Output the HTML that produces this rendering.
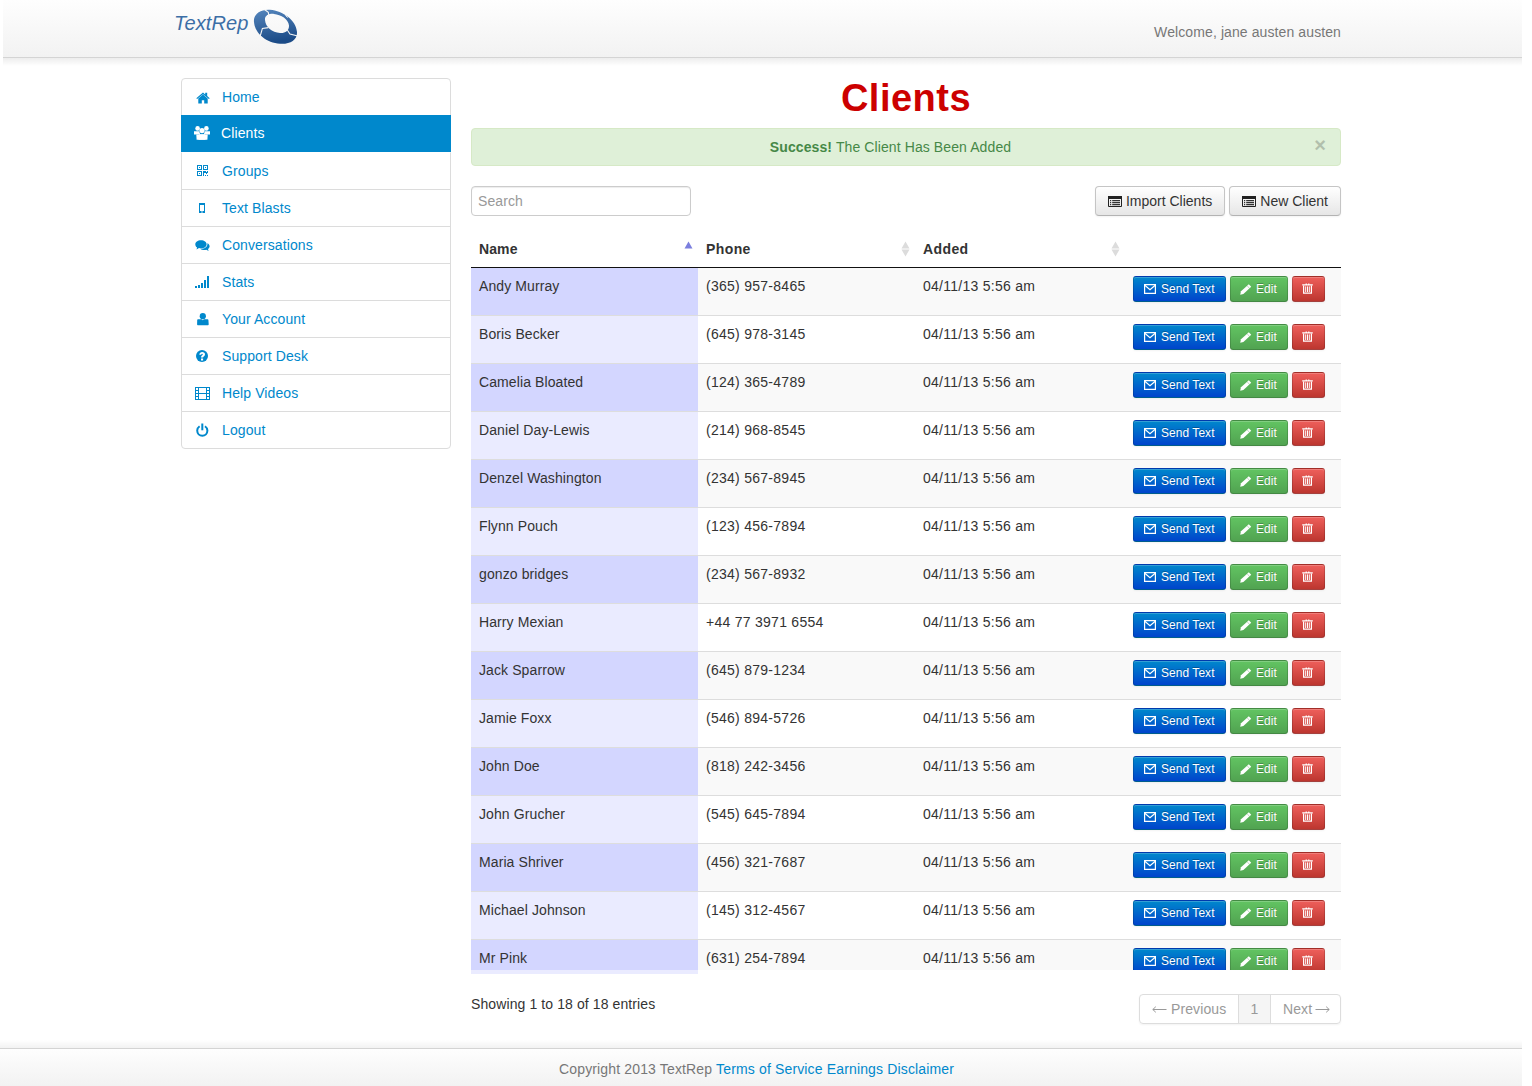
<!DOCTYPE html>
<html><head><meta charset="utf-8">
<style>
*{box-sizing:border-box;}
html,body{margin:0;padding:0;}
body{letter-spacing:.1px;width:1532px;height:1086px;overflow:hidden;position:relative;background:#fff;font-family:"Liberation Sans",sans-serif;font-size:14px;line-height:20px;color:#333;}
a{color:#0088cc;text-decoration:none;}
#hdr{position:absolute;left:3px;top:0;width:1519px;height:58px;background:linear-gradient(#fefefe,#f2f2f2);border-bottom:1px solid #d4d4d4;}
#hsh{position:absolute;left:3px;top:58px;width:1519px;height:8px;background:linear-gradient(rgba(0,0,0,.07),rgba(0,0,0,0));}
#logo{position:absolute;left:175px;top:9px;}
#logotxt{position:absolute;left:-4px;top:4px;font-style:italic;font-size:20px;line-height:20px;color:#3c6ea6;white-space:nowrap;}
#welcome{position:absolute;right:181px;top:22px;color:#777;font-size:14px;}
#side{position:absolute;left:181px;top:78px;width:270px;margin:0;padding:0;list-style:none;border-radius:4px;}
#side li a{display:block;position:relative;height:38px;margin:0 0 -1px;padding:8px 14px 8px 40px;border:1px solid #dcdcdc;color:#0088cc;background:#fff;}
#side li:first-child a{border-radius:4px 4px 0 0;}
#side li:last-child a{border-radius:0 0 4px 4px;}
#side li.active + li a{border-top-color:#fff;}
#side li.active a{z-index:2;height:37px;margin-bottom:0;padding:8px 14px 8px 40px;border:0;background:#0088cc;color:#fff;}
#side svg{position:absolute;left:14px;top:12px;}
#main{position:absolute;left:471px;top:60px;width:870px;}
h1{margin:0;position:absolute;left:0;width:870px;top:14px;text-align:center;color:#cc0000;font-size:38px;line-height:48px;font-weight:bold;letter-spacing:.5px;}
.alert{position:absolute;left:0;top:68px;width:870px;height:38px;padding:8px 45px 8px 14px;background:#dff0d8;border:1px solid #d6e9c6;border-radius:4px;color:#468847;text-align:center;}
.close{position:absolute;right:14px;top:6px;font-size:20px;font-weight:bold;color:#000;opacity:.2;line-height:20px;}
#search{position:absolute;left:0;top:126px;width:220px;height:30px;border:1px solid #ccc;border-radius:4px;padding:4px 6px;color:#999;box-shadow:inset 0 1px 1px rgba(0,0,0,.075);}
.btn{letter-spacing:0;display:inline-block;height:30px;padding:4px 12px;border:1px solid #c5c5c5;border-bottom-color:#b3b3b3;border-radius:4px;background:linear-gradient(#ffffff,#e6e6e6);color:#333;box-shadow:inset 0 1px 0 rgba(255,255,255,.2),0 1px 2px rgba(0,0,0,.05);white-space:nowrap;}
#tb{position:absolute;right:0;top:126px;}
table{border-collapse:separate;border-spacing:0;table-layout:fixed;}
#thead{position:absolute;left:0;top:171px;width:870px;}
#thead th{height:37px;text-align:left;padding:8px;font-weight:bold;border-bottom:1px solid #111;position:relative;vertical-align:top;box-sizing:border-box;}
#thead th svg{position:absolute;right:5px;top:10px;}
#body{position:absolute;left:0;top:208px;width:870px;height:702px;overflow:hidden;}
#strip{position:absolute;left:0;top:910px;width:227px;height:4px;background:#eaebff;}
#rows{width:870px;}
#body td{padding:8px;height:48px;vertical-align:top;border-top:1px solid #ddd;white-space:nowrap;overflow:hidden;box-sizing:border-box;}
#body tr:first-child td{border-top:0;height:47px;}
#body tr.odd td{background:#f9f9f9;}
#body tr.odd td.s{background:#d3d6ff;}
#body tr.even td.s{background:#eaebff;}
.c1{width:227px;}.c2{width:217px;}.c3{width:210px;}.c4{width:216px;}
#body td.c2,#body td.c3{letter-spacing:.27px;}
#thead th.c2,#thead th.c3{letter-spacing:.4px;}
.bs{display:inline-block;height:26px;padding:2px 10px;font-size:11.9px;line-height:20px;border-radius:3px;color:#fff;border:1px solid rgba(0,0,0,.15);border-bottom-color:rgba(0,0,0,.3);text-shadow:0 -1px 0 rgba(0,0,0,.25);white-space:nowrap;vertical-align:top;box-shadow:inset 0 1px 0 rgba(255,255,255,.2),0 1px 2px rgba(0,0,0,.05);}
.bp{width:93px;background:linear-gradient(#0088cc,#0044cc);}
.bg{width:58px;background:linear-gradient(#62c462,#51a351);}
.bd{width:33px;background:linear-gradient(#ee5f5b,#bd362f);}
#info{position:absolute;left:0;top:934px;}
#pag{position:absolute;left:1139px;top:994px;width:202px;height:30px;display:flex;border:1px solid #ddd;border-radius:4px;box-shadow:0 1px 2px rgba(0,0,0,.05);color:#999;}
#pag span{position:relative;display:block;height:28px;padding-top:4px;padding-bottom:4px;line-height:20px;border-left:1px solid #ddd;}
#pag span:first-child{border-left:0;}
#ftr{position:absolute;left:0;top:1048px;width:1522px;height:38px;border-top:1px solid #d4d4d4;background:linear-gradient(#fefefe,#f2f2f2);}
#fsh{position:absolute;left:0;top:1040px;width:1522px;height:8px;background:linear-gradient(rgba(0,0,0,0),rgba(0,0,0,.05));}
#ftxt{position:absolute;left:559px;top:10px;color:#777;white-space:nowrap;letter-spacing:.15px;}
</style></head><body>
<div id="hdr">
  <div id="logo"><span id="logotxt">TextRep</span><svg id="ring" width="52" height="42" viewBox="0 0 52 42" style="position:absolute;left:72px;top:-3px">
<defs><linearGradient id="rg" x1="0" y1="0" x2="0.2" y2="1"><stop offset="0" stop-color="#5586bd"/><stop offset="1" stop-color="#1b4b87"/></linearGradient></defs>
<path fill="url(#rg)" fill-rule="evenodd" d="M4 16C3 8 11 3 20 3.8C33 5 46 14 47 26C47.5 34 40 38.5 30 37.8C17 37 5 28 4 16z M15 14C14.5 9.5 19 7.5 24 7.9C31 8.5 38.5 13 39 19.5C39.3 24.5 35 27.5 30 27C22 26.5 15.5 21 15 14z"/>
<path d="M14.5 3.5L18.3 6.4L18.9 9.8" stroke="#f5f5f5" stroke-width="1.1" fill="none"/>
<path d="M35.5 9.2L37.6 11.6" stroke="#f5f5f5" stroke-width="1" fill="none"/>
<path d="M37.3 24L40 28L47.8 30" stroke="#f5f5f5" stroke-width="1.1" fill="none"/>
<path d="M18.5 21.6L12.4 22.4L9.8 31.5" stroke="#f5f5f5" stroke-width="1.1" fill="none"/>
</svg></div>
  <div id="welcome">Welcome, jane austen austen</div>
</div>

<div id="hsh"></div>
<ul id="side">
  <li><a><svg width="14" height="12" viewBox="0 0 14 12" style="left:14px;top:13px"><path d="M0.3 6.2L7 0.6L9.2 2.4V0.8h2v3.3L13.7 6.2L12.9 7.1L7 2.2L1.1 7.1z" fill="#0088cc"/><path d="M2.3 6.4L7 2.6L11.7 6.4V11.4H8.2V8.3H5.8V11.4H2.3z" fill="#0088cc"/></svg>Home</a></li>
  <li class="active"><a><svg width="16" height="15" viewBox="0 0 16 15" style="left:13px;top:11px"><circle cx="3.6" cy="2.4" r="2.3" fill="#fff"/><circle cx="12.4" cy="2.4" r="2.3" fill="#fff"/><path d="M0 5.2h5.2l1 3.2H0z M10.8 5.2H16v3.2H9.8z" fill="#fff"/><circle cx="8" cy="4.6" r="2.6" fill="#fff"/><path d="M5.2 8.2h5.6v.1L11.6 13.7H4.4z" fill="#fff"/><path d="M2.3 8.4h11.4L13.4 13.7H2.6z" fill="#fff"/></svg>Clients</a></li>
  <li><a><svg width="11" height="11" viewBox="0 0 11 11" shape-rendering="crispEdges" style="left:15px;top:12px"><path d="M0.5 0.5h4v4h-4z M6.5 0.5h4v4h-4z M0.5 6.5h4v4h-4z" fill="none" stroke="#0088cc" stroke-width="1"/><path d="M2 2h1v1H2z M8 2h1v1H8z M2 8h1v1H2z M6 6h1v5H6z M7 6h2v2H7z M9 7h1v2H9z M10 6h1v2h-1z M8 10h1v1H8z M10 10h1v1h-1z" fill="#0088cc"/></svg>Groups</a></li>
  <li><a><svg width="6" height="10" viewBox="0 0 6 10" style="left:17px;top:13px"><path d="M0 0h6v2H0z M0 0h1v10H0z M5 0h1v10H5z M0 8h2.6v2H0z M3.4 8H6v2H3.4z" fill="#0088cc"/></svg>Text Blasts</a></li>
  <li><a><svg width="15" height="12" viewBox="0 0 15 12" style="left:13px;top:13px"><path d="M6 0.2C9.3 0.2 11.6 1.9 11.6 4.3S9.3 8.4 6 8.4C5.3 8.4 4.6 8.3 4 8.1L1.5 9.4L2.1 7.6C0.8 6.8 0.3 5.6 0.3 4.3C0.3 1.9 2.7 0.2 6 0.2z" fill="#0088cc"/><path d="M12.3 3.2C13.8 3.9 14.6 5 14.6 6.3C14.6 7.5 14 8.4 13 9.1L13.6 10.9L11.3 9.8C10.6 10 10 10.1 9.2 10.1C7.7 10.1 6.4 9.7 5.6 9C9.5 9 12.4 6.9 12.4 4.3z" fill="#0088cc"/></svg>Conversations</a></li>
  <li><a><svg width="14" height="12" viewBox="0 0 14 12" shape-rendering="crispEdges" style="left:13px;top:12px"><path d="M0 10h2v2H0z M3 9h2v3H3z M6 7h2v5H6z M9 4h2v8H9z M12 0h2v12h-2z" fill="#0088cc"/></svg>Stats</a></li>
  <li><a><svg width="12" height="13" viewBox="0 0 12 13" style="left:15px;top:12px"><circle cx="5.8" cy="3.2" r="3.1" fill="#0088cc"/><path d="M1 6.3h3.5L5.8 7.2L7.1 6.3h3.5c.5 0 .8.4.8.8L11.7 11.2c0 .6-.4 1-1 1H1.1c-.6 0-1-.4-1-1L.2 7.1c0-.5.4-.8.8-.8z" fill="#0088cc"/></svg>Your Account</a></li>
  <li><a><svg width="12" height="12" viewBox="0 0 12 12" style="left:14px;top:12px"><circle cx="6" cy="6" r="6" fill="#0088cc"/><path d="M3.3 4.7C3.5 3 4.6 2.1 6.2 2.1C7.9 2.1 9 3 9 4.4C9 6 7.2 6.2 7.1 7.5H5C5 5.6 6.8 5.4 6.8 4.5C6.8 4 6.5 3.8 6.1 3.8C5.6 3.8 5.3 4.1 5.2 4.7z M5 8.4h2.1v2H5z" fill="#fff"/></svg>Support Desk</a></li>
  <li><a><svg width="15" height="13" viewBox="0 0 15 13" shape-rendering="crispEdges" style="left:13px;top:12px"><path d="M0.5 0.5h14v12h-14z M3.5 0.5v12 M11.5 0.5v12 M0.5 6.5h14 M0.5 3.5h3 M0.5 9.5h3 M11.5 3.5h3 M11.5 9.5h3" fill="none" stroke="#0088cc" stroke-width="1"/></svg>Help Videos</a></li>
  <li><a><svg width="13" height="14" viewBox="0 0 13 14" style="left:14px;top:11px"><path d="M3.6 3.2C2.2 4.2 1.2 5.7 1.2 7.6C1.2 10.5 3.5 12.8 6.3 12.8S11.4 10.5 11.4 7.6C11.4 5.7 10.4 4.2 9 3.2" fill="none" stroke="#0088cc" stroke-width="2"/><path d="M5.3 0.5h2v6.8h-2z" fill="#0088cc"/></svg>Logout</a></li>
</ul>

<div id="main">
  <h1>Clients</h1>
  <div class="alert"><b>Success!</b> The Client Has Been Added<span class="close">&times;</span></div>
  <div id="search">Search</div>
  <div id="tb"><span class="btn"><svg width="14" height="11" viewBox="0 0 14 11" style="vertical-align:-1px;margin-right:4px"><path d="M0.5 0.5h13v10h-13z" fill="none" stroke="#222" stroke-width="1"/><path d="M0 0h14v3H0z" fill="#222"/><path d="M2 4.1h1.2v1.1H2z M2 6.1h1.2v1.1H2z M2 8.1h1.2v1.1H2z M4.2 4.1h7.8v1.1H4.2z M4.2 6.1h7.8v1.1H4.2z M4.2 8.1h7.8v1.1H4.2z" fill="#333"/></svg>Import Clients</span> <span class="btn"><svg width="14" height="11" viewBox="0 0 14 11" style="vertical-align:-1px;margin-right:4px"><path d="M0.5 0.5h13v10h-13z" fill="none" stroke="#222" stroke-width="1"/><path d="M0 0h14v3H0z" fill="#222"/><path d="M2 4.1h1.2v1.1H2z M2 6.1h1.2v1.1H2z M2 8.1h1.2v1.1H2z M4.2 4.1h7.8v1.1H4.2z M4.2 6.1h7.8v1.1H4.2z M4.2 8.1h7.8v1.1H4.2z" fill="#333"/></svg>New Client</span></div>
  <table id="thead"><tr><th class="c1">Name<svg width="9" height="16" viewBox="0 0 9 16"><path d="M0.5 7.5L4.5 0.5L8.5 7.5z" fill="#7b7fde"/></svg></th><th class="c2">Phone<svg width="9" height="16" viewBox="0 0 9 16"><path d="M0.5 7.5L4.5 0.5L8.5 7.5z M0.5 8.5L4.5 15.5L8.5 8.5z" fill="#dcdcdc"/></svg></th><th class="c3">Added<svg width="9" height="16" viewBox="0 0 9 16"><path d="M0.5 7.5L4.5 0.5L8.5 7.5z M0.5 8.5L4.5 15.5L8.5 8.5z" fill="#dcdcdc"/></svg></th><th class="c4"></th></tr></table>
  <div id="body"><table style="width:870px" id="rows">
<tr class="odd"><td class="c1 s">Andy Murray</td><td class="c2">(365) 957-8465</td><td class="c3">04/11/13 5:56 am</td><td class="c4"><span class="bs bp"><svg class="ic" width="12" height="10" viewBox="0 0 12 10" style="margin-right:5px;vertical-align:-1px"><path d="M0.6 0.6h10.8v8.8H0.6z" fill="none" stroke="#fff" stroke-width="1.2"/><path d="M0.8 1.2L6 5.6L11.2 1.2" fill="none" stroke="#fff" stroke-width="1.2"/></svg>Send Text</span> <span class="bs bg"><svg class="ic" width="12" height="11" viewBox="0 0 12 11" style="margin-right:4px;vertical-align:-2px;margin-left:-1px"><path d="M0.2 10.8L1 7.3L8.8 0.2L11.2 2.8L3.4 9.9z" fill="#fff"/><path d="M7.1 1.7L9.5 4.4" stroke="rgba(0,80,0,.35)" stroke-width=".7"/></svg>Edit</span> <span class="bs bd"><svg class="ic" width="11" height="11" viewBox="0 0 11 11" style="vertical-align:-1px;margin-left:-1px;margin-right:1px"><path d="M0.2 1.3h10.6v1.3H0.2z M3.6 0.4h1.3v1H3.6z M6.1 0.4h1.3v1H6.1z" fill="#fff"/><path d="M1.6 2.4v7.8h7.8V2.4" fill="none" stroke="#fff" stroke-width="1.2"/><path d="M3.7 3.4v5.6M5.5 3.4v5.6M7.3 3.4v5.6" stroke="#fff" stroke-width="1"/></svg></span></td></tr>
<tr class="even"><td class="c1 s">Boris Becker</td><td class="c2">(645) 978-3145</td><td class="c3">04/11/13 5:56 am</td><td class="c4"><span class="bs bp"><svg class="ic" width="12" height="10" viewBox="0 0 12 10" style="margin-right:5px;vertical-align:-1px"><path d="M0.6 0.6h10.8v8.8H0.6z" fill="none" stroke="#fff" stroke-width="1.2"/><path d="M0.8 1.2L6 5.6L11.2 1.2" fill="none" stroke="#fff" stroke-width="1.2"/></svg>Send Text</span> <span class="bs bg"><svg class="ic" width="12" height="11" viewBox="0 0 12 11" style="margin-right:4px;vertical-align:-2px;margin-left:-1px"><path d="M0.2 10.8L1 7.3L8.8 0.2L11.2 2.8L3.4 9.9z" fill="#fff"/><path d="M7.1 1.7L9.5 4.4" stroke="rgba(0,80,0,.35)" stroke-width=".7"/></svg>Edit</span> <span class="bs bd"><svg class="ic" width="11" height="11" viewBox="0 0 11 11" style="vertical-align:-1px;margin-left:-1px;margin-right:1px"><path d="M0.2 1.3h10.6v1.3H0.2z M3.6 0.4h1.3v1H3.6z M6.1 0.4h1.3v1H6.1z" fill="#fff"/><path d="M1.6 2.4v7.8h7.8V2.4" fill="none" stroke="#fff" stroke-width="1.2"/><path d="M3.7 3.4v5.6M5.5 3.4v5.6M7.3 3.4v5.6" stroke="#fff" stroke-width="1"/></svg></span></td></tr>
<tr class="odd"><td class="c1 s">Camelia Bloated</td><td class="c2">(124) 365-4789</td><td class="c3">04/11/13 5:56 am</td><td class="c4"><span class="bs bp"><svg class="ic" width="12" height="10" viewBox="0 0 12 10" style="margin-right:5px;vertical-align:-1px"><path d="M0.6 0.6h10.8v8.8H0.6z" fill="none" stroke="#fff" stroke-width="1.2"/><path d="M0.8 1.2L6 5.6L11.2 1.2" fill="none" stroke="#fff" stroke-width="1.2"/></svg>Send Text</span> <span class="bs bg"><svg class="ic" width="12" height="11" viewBox="0 0 12 11" style="margin-right:4px;vertical-align:-2px;margin-left:-1px"><path d="M0.2 10.8L1 7.3L8.8 0.2L11.2 2.8L3.4 9.9z" fill="#fff"/><path d="M7.1 1.7L9.5 4.4" stroke="rgba(0,80,0,.35)" stroke-width=".7"/></svg>Edit</span> <span class="bs bd"><svg class="ic" width="11" height="11" viewBox="0 0 11 11" style="vertical-align:-1px;margin-left:-1px;margin-right:1px"><path d="M0.2 1.3h10.6v1.3H0.2z M3.6 0.4h1.3v1H3.6z M6.1 0.4h1.3v1H6.1z" fill="#fff"/><path d="M1.6 2.4v7.8h7.8V2.4" fill="none" stroke="#fff" stroke-width="1.2"/><path d="M3.7 3.4v5.6M5.5 3.4v5.6M7.3 3.4v5.6" stroke="#fff" stroke-width="1"/></svg></span></td></tr>
<tr class="even"><td class="c1 s">Daniel Day-Lewis</td><td class="c2">(214) 968-8545</td><td class="c3">04/11/13 5:56 am</td><td class="c4"><span class="bs bp"><svg class="ic" width="12" height="10" viewBox="0 0 12 10" style="margin-right:5px;vertical-align:-1px"><path d="M0.6 0.6h10.8v8.8H0.6z" fill="none" stroke="#fff" stroke-width="1.2"/><path d="M0.8 1.2L6 5.6L11.2 1.2" fill="none" stroke="#fff" stroke-width="1.2"/></svg>Send Text</span> <span class="bs bg"><svg class="ic" width="12" height="11" viewBox="0 0 12 11" style="margin-right:4px;vertical-align:-2px;margin-left:-1px"><path d="M0.2 10.8L1 7.3L8.8 0.2L11.2 2.8L3.4 9.9z" fill="#fff"/><path d="M7.1 1.7L9.5 4.4" stroke="rgba(0,80,0,.35)" stroke-width=".7"/></svg>Edit</span> <span class="bs bd"><svg class="ic" width="11" height="11" viewBox="0 0 11 11" style="vertical-align:-1px;margin-left:-1px;margin-right:1px"><path d="M0.2 1.3h10.6v1.3H0.2z M3.6 0.4h1.3v1H3.6z M6.1 0.4h1.3v1H6.1z" fill="#fff"/><path d="M1.6 2.4v7.8h7.8V2.4" fill="none" stroke="#fff" stroke-width="1.2"/><path d="M3.7 3.4v5.6M5.5 3.4v5.6M7.3 3.4v5.6" stroke="#fff" stroke-width="1"/></svg></span></td></tr>
<tr class="odd"><td class="c1 s">Denzel Washington</td><td class="c2">(234) 567-8945</td><td class="c3">04/11/13 5:56 am</td><td class="c4"><span class="bs bp"><svg class="ic" width="12" height="10" viewBox="0 0 12 10" style="margin-right:5px;vertical-align:-1px"><path d="M0.6 0.6h10.8v8.8H0.6z" fill="none" stroke="#fff" stroke-width="1.2"/><path d="M0.8 1.2L6 5.6L11.2 1.2" fill="none" stroke="#fff" stroke-width="1.2"/></svg>Send Text</span> <span class="bs bg"><svg class="ic" width="12" height="11" viewBox="0 0 12 11" style="margin-right:4px;vertical-align:-2px;margin-left:-1px"><path d="M0.2 10.8L1 7.3L8.8 0.2L11.2 2.8L3.4 9.9z" fill="#fff"/><path d="M7.1 1.7L9.5 4.4" stroke="rgba(0,80,0,.35)" stroke-width=".7"/></svg>Edit</span> <span class="bs bd"><svg class="ic" width="11" height="11" viewBox="0 0 11 11" style="vertical-align:-1px;margin-left:-1px;margin-right:1px"><path d="M0.2 1.3h10.6v1.3H0.2z M3.6 0.4h1.3v1H3.6z M6.1 0.4h1.3v1H6.1z" fill="#fff"/><path d="M1.6 2.4v7.8h7.8V2.4" fill="none" stroke="#fff" stroke-width="1.2"/><path d="M3.7 3.4v5.6M5.5 3.4v5.6M7.3 3.4v5.6" stroke="#fff" stroke-width="1"/></svg></span></td></tr>
<tr class="even"><td class="c1 s">Flynn Pouch</td><td class="c2">(123) 456-7894</td><td class="c3">04/11/13 5:56 am</td><td class="c4"><span class="bs bp"><svg class="ic" width="12" height="10" viewBox="0 0 12 10" style="margin-right:5px;vertical-align:-1px"><path d="M0.6 0.6h10.8v8.8H0.6z" fill="none" stroke="#fff" stroke-width="1.2"/><path d="M0.8 1.2L6 5.6L11.2 1.2" fill="none" stroke="#fff" stroke-width="1.2"/></svg>Send Text</span> <span class="bs bg"><svg class="ic" width="12" height="11" viewBox="0 0 12 11" style="margin-right:4px;vertical-align:-2px;margin-left:-1px"><path d="M0.2 10.8L1 7.3L8.8 0.2L11.2 2.8L3.4 9.9z" fill="#fff"/><path d="M7.1 1.7L9.5 4.4" stroke="rgba(0,80,0,.35)" stroke-width=".7"/></svg>Edit</span> <span class="bs bd"><svg class="ic" width="11" height="11" viewBox="0 0 11 11" style="vertical-align:-1px;margin-left:-1px;margin-right:1px"><path d="M0.2 1.3h10.6v1.3H0.2z M3.6 0.4h1.3v1H3.6z M6.1 0.4h1.3v1H6.1z" fill="#fff"/><path d="M1.6 2.4v7.8h7.8V2.4" fill="none" stroke="#fff" stroke-width="1.2"/><path d="M3.7 3.4v5.6M5.5 3.4v5.6M7.3 3.4v5.6" stroke="#fff" stroke-width="1"/></svg></span></td></tr>
<tr class="odd"><td class="c1 s">gonzo bridges</td><td class="c2">(234) 567-8932</td><td class="c3">04/11/13 5:56 am</td><td class="c4"><span class="bs bp"><svg class="ic" width="12" height="10" viewBox="0 0 12 10" style="margin-right:5px;vertical-align:-1px"><path d="M0.6 0.6h10.8v8.8H0.6z" fill="none" stroke="#fff" stroke-width="1.2"/><path d="M0.8 1.2L6 5.6L11.2 1.2" fill="none" stroke="#fff" stroke-width="1.2"/></svg>Send Text</span> <span class="bs bg"><svg class="ic" width="12" height="11" viewBox="0 0 12 11" style="margin-right:4px;vertical-align:-2px;margin-left:-1px"><path d="M0.2 10.8L1 7.3L8.8 0.2L11.2 2.8L3.4 9.9z" fill="#fff"/><path d="M7.1 1.7L9.5 4.4" stroke="rgba(0,80,0,.35)" stroke-width=".7"/></svg>Edit</span> <span class="bs bd"><svg class="ic" width="11" height="11" viewBox="0 0 11 11" style="vertical-align:-1px;margin-left:-1px;margin-right:1px"><path d="M0.2 1.3h10.6v1.3H0.2z M3.6 0.4h1.3v1H3.6z M6.1 0.4h1.3v1H6.1z" fill="#fff"/><path d="M1.6 2.4v7.8h7.8V2.4" fill="none" stroke="#fff" stroke-width="1.2"/><path d="M3.7 3.4v5.6M5.5 3.4v5.6M7.3 3.4v5.6" stroke="#fff" stroke-width="1"/></svg></span></td></tr>
<tr class="even"><td class="c1 s">Harry Mexian</td><td class="c2">+44 77 3971 6554</td><td class="c3">04/11/13 5:56 am</td><td class="c4"><span class="bs bp"><svg class="ic" width="12" height="10" viewBox="0 0 12 10" style="margin-right:5px;vertical-align:-1px"><path d="M0.6 0.6h10.8v8.8H0.6z" fill="none" stroke="#fff" stroke-width="1.2"/><path d="M0.8 1.2L6 5.6L11.2 1.2" fill="none" stroke="#fff" stroke-width="1.2"/></svg>Send Text</span> <span class="bs bg"><svg class="ic" width="12" height="11" viewBox="0 0 12 11" style="margin-right:4px;vertical-align:-2px;margin-left:-1px"><path d="M0.2 10.8L1 7.3L8.8 0.2L11.2 2.8L3.4 9.9z" fill="#fff"/><path d="M7.1 1.7L9.5 4.4" stroke="rgba(0,80,0,.35)" stroke-width=".7"/></svg>Edit</span> <span class="bs bd"><svg class="ic" width="11" height="11" viewBox="0 0 11 11" style="vertical-align:-1px;margin-left:-1px;margin-right:1px"><path d="M0.2 1.3h10.6v1.3H0.2z M3.6 0.4h1.3v1H3.6z M6.1 0.4h1.3v1H6.1z" fill="#fff"/><path d="M1.6 2.4v7.8h7.8V2.4" fill="none" stroke="#fff" stroke-width="1.2"/><path d="M3.7 3.4v5.6M5.5 3.4v5.6M7.3 3.4v5.6" stroke="#fff" stroke-width="1"/></svg></span></td></tr>
<tr class="odd"><td class="c1 s">Jack Sparrow</td><td class="c2">(645) 879-1234</td><td class="c3">04/11/13 5:56 am</td><td class="c4"><span class="bs bp"><svg class="ic" width="12" height="10" viewBox="0 0 12 10" style="margin-right:5px;vertical-align:-1px"><path d="M0.6 0.6h10.8v8.8H0.6z" fill="none" stroke="#fff" stroke-width="1.2"/><path d="M0.8 1.2L6 5.6L11.2 1.2" fill="none" stroke="#fff" stroke-width="1.2"/></svg>Send Text</span> <span class="bs bg"><svg class="ic" width="12" height="11" viewBox="0 0 12 11" style="margin-right:4px;vertical-align:-2px;margin-left:-1px"><path d="M0.2 10.8L1 7.3L8.8 0.2L11.2 2.8L3.4 9.9z" fill="#fff"/><path d="M7.1 1.7L9.5 4.4" stroke="rgba(0,80,0,.35)" stroke-width=".7"/></svg>Edit</span> <span class="bs bd"><svg class="ic" width="11" height="11" viewBox="0 0 11 11" style="vertical-align:-1px;margin-left:-1px;margin-right:1px"><path d="M0.2 1.3h10.6v1.3H0.2z M3.6 0.4h1.3v1H3.6z M6.1 0.4h1.3v1H6.1z" fill="#fff"/><path d="M1.6 2.4v7.8h7.8V2.4" fill="none" stroke="#fff" stroke-width="1.2"/><path d="M3.7 3.4v5.6M5.5 3.4v5.6M7.3 3.4v5.6" stroke="#fff" stroke-width="1"/></svg></span></td></tr>
<tr class="even"><td class="c1 s">Jamie Foxx</td><td class="c2">(546) 894-5726</td><td class="c3">04/11/13 5:56 am</td><td class="c4"><span class="bs bp"><svg class="ic" width="12" height="10" viewBox="0 0 12 10" style="margin-right:5px;vertical-align:-1px"><path d="M0.6 0.6h10.8v8.8H0.6z" fill="none" stroke="#fff" stroke-width="1.2"/><path d="M0.8 1.2L6 5.6L11.2 1.2" fill="none" stroke="#fff" stroke-width="1.2"/></svg>Send Text</span> <span class="bs bg"><svg class="ic" width="12" height="11" viewBox="0 0 12 11" style="margin-right:4px;vertical-align:-2px;margin-left:-1px"><path d="M0.2 10.8L1 7.3L8.8 0.2L11.2 2.8L3.4 9.9z" fill="#fff"/><path d="M7.1 1.7L9.5 4.4" stroke="rgba(0,80,0,.35)" stroke-width=".7"/></svg>Edit</span> <span class="bs bd"><svg class="ic" width="11" height="11" viewBox="0 0 11 11" style="vertical-align:-1px;margin-left:-1px;margin-right:1px"><path d="M0.2 1.3h10.6v1.3H0.2z M3.6 0.4h1.3v1H3.6z M6.1 0.4h1.3v1H6.1z" fill="#fff"/><path d="M1.6 2.4v7.8h7.8V2.4" fill="none" stroke="#fff" stroke-width="1.2"/><path d="M3.7 3.4v5.6M5.5 3.4v5.6M7.3 3.4v5.6" stroke="#fff" stroke-width="1"/></svg></span></td></tr>
<tr class="odd"><td class="c1 s">John Doe</td><td class="c2">(818) 242-3456</td><td class="c3">04/11/13 5:56 am</td><td class="c4"><span class="bs bp"><svg class="ic" width="12" height="10" viewBox="0 0 12 10" style="margin-right:5px;vertical-align:-1px"><path d="M0.6 0.6h10.8v8.8H0.6z" fill="none" stroke="#fff" stroke-width="1.2"/><path d="M0.8 1.2L6 5.6L11.2 1.2" fill="none" stroke="#fff" stroke-width="1.2"/></svg>Send Text</span> <span class="bs bg"><svg class="ic" width="12" height="11" viewBox="0 0 12 11" style="margin-right:4px;vertical-align:-2px;margin-left:-1px"><path d="M0.2 10.8L1 7.3L8.8 0.2L11.2 2.8L3.4 9.9z" fill="#fff"/><path d="M7.1 1.7L9.5 4.4" stroke="rgba(0,80,0,.35)" stroke-width=".7"/></svg>Edit</span> <span class="bs bd"><svg class="ic" width="11" height="11" viewBox="0 0 11 11" style="vertical-align:-1px;margin-left:-1px;margin-right:1px"><path d="M0.2 1.3h10.6v1.3H0.2z M3.6 0.4h1.3v1H3.6z M6.1 0.4h1.3v1H6.1z" fill="#fff"/><path d="M1.6 2.4v7.8h7.8V2.4" fill="none" stroke="#fff" stroke-width="1.2"/><path d="M3.7 3.4v5.6M5.5 3.4v5.6M7.3 3.4v5.6" stroke="#fff" stroke-width="1"/></svg></span></td></tr>
<tr class="even"><td class="c1 s">John Grucher</td><td class="c2">(545) 645-7894</td><td class="c3">04/11/13 5:56 am</td><td class="c4"><span class="bs bp"><svg class="ic" width="12" height="10" viewBox="0 0 12 10" style="margin-right:5px;vertical-align:-1px"><path d="M0.6 0.6h10.8v8.8H0.6z" fill="none" stroke="#fff" stroke-width="1.2"/><path d="M0.8 1.2L6 5.6L11.2 1.2" fill="none" stroke="#fff" stroke-width="1.2"/></svg>Send Text</span> <span class="bs bg"><svg class="ic" width="12" height="11" viewBox="0 0 12 11" style="margin-right:4px;vertical-align:-2px;margin-left:-1px"><path d="M0.2 10.8L1 7.3L8.8 0.2L11.2 2.8L3.4 9.9z" fill="#fff"/><path d="M7.1 1.7L9.5 4.4" stroke="rgba(0,80,0,.35)" stroke-width=".7"/></svg>Edit</span> <span class="bs bd"><svg class="ic" width="11" height="11" viewBox="0 0 11 11" style="vertical-align:-1px;margin-left:-1px;margin-right:1px"><path d="M0.2 1.3h10.6v1.3H0.2z M3.6 0.4h1.3v1H3.6z M6.1 0.4h1.3v1H6.1z" fill="#fff"/><path d="M1.6 2.4v7.8h7.8V2.4" fill="none" stroke="#fff" stroke-width="1.2"/><path d="M3.7 3.4v5.6M5.5 3.4v5.6M7.3 3.4v5.6" stroke="#fff" stroke-width="1"/></svg></span></td></tr>
<tr class="odd"><td class="c1 s">Maria Shriver</td><td class="c2">(456) 321-7687</td><td class="c3">04/11/13 5:56 am</td><td class="c4"><span class="bs bp"><svg class="ic" width="12" height="10" viewBox="0 0 12 10" style="margin-right:5px;vertical-align:-1px"><path d="M0.6 0.6h10.8v8.8H0.6z" fill="none" stroke="#fff" stroke-width="1.2"/><path d="M0.8 1.2L6 5.6L11.2 1.2" fill="none" stroke="#fff" stroke-width="1.2"/></svg>Send Text</span> <span class="bs bg"><svg class="ic" width="12" height="11" viewBox="0 0 12 11" style="margin-right:4px;vertical-align:-2px;margin-left:-1px"><path d="M0.2 10.8L1 7.3L8.8 0.2L11.2 2.8L3.4 9.9z" fill="#fff"/><path d="M7.1 1.7L9.5 4.4" stroke="rgba(0,80,0,.35)" stroke-width=".7"/></svg>Edit</span> <span class="bs bd"><svg class="ic" width="11" height="11" viewBox="0 0 11 11" style="vertical-align:-1px;margin-left:-1px;margin-right:1px"><path d="M0.2 1.3h10.6v1.3H0.2z M3.6 0.4h1.3v1H3.6z M6.1 0.4h1.3v1H6.1z" fill="#fff"/><path d="M1.6 2.4v7.8h7.8V2.4" fill="none" stroke="#fff" stroke-width="1.2"/><path d="M3.7 3.4v5.6M5.5 3.4v5.6M7.3 3.4v5.6" stroke="#fff" stroke-width="1"/></svg></span></td></tr>
<tr class="even"><td class="c1 s">Michael Johnson</td><td class="c2">(145) 312-4567</td><td class="c3">04/11/13 5:56 am</td><td class="c4"><span class="bs bp"><svg class="ic" width="12" height="10" viewBox="0 0 12 10" style="margin-right:5px;vertical-align:-1px"><path d="M0.6 0.6h10.8v8.8H0.6z" fill="none" stroke="#fff" stroke-width="1.2"/><path d="M0.8 1.2L6 5.6L11.2 1.2" fill="none" stroke="#fff" stroke-width="1.2"/></svg>Send Text</span> <span class="bs bg"><svg class="ic" width="12" height="11" viewBox="0 0 12 11" style="margin-right:4px;vertical-align:-2px;margin-left:-1px"><path d="M0.2 10.8L1 7.3L8.8 0.2L11.2 2.8L3.4 9.9z" fill="#fff"/><path d="M7.1 1.7L9.5 4.4" stroke="rgba(0,80,0,.35)" stroke-width=".7"/></svg>Edit</span> <span class="bs bd"><svg class="ic" width="11" height="11" viewBox="0 0 11 11" style="vertical-align:-1px;margin-left:-1px;margin-right:1px"><path d="M0.2 1.3h10.6v1.3H0.2z M3.6 0.4h1.3v1H3.6z M6.1 0.4h1.3v1H6.1z" fill="#fff"/><path d="M1.6 2.4v7.8h7.8V2.4" fill="none" stroke="#fff" stroke-width="1.2"/><path d="M3.7 3.4v5.6M5.5 3.4v5.6M7.3 3.4v5.6" stroke="#fff" stroke-width="1"/></svg></span></td></tr>
<tr class="odd"><td class="c1 s">Mr Pink</td><td class="c2">(631) 254-7894</td><td class="c3">04/11/13 5:56 am</td><td class="c4"><span class="bs bp"><svg class="ic" width="12" height="10" viewBox="0 0 12 10" style="margin-right:5px;vertical-align:-1px"><path d="M0.6 0.6h10.8v8.8H0.6z" fill="none" stroke="#fff" stroke-width="1.2"/><path d="M0.8 1.2L6 5.6L11.2 1.2" fill="none" stroke="#fff" stroke-width="1.2"/></svg>Send Text</span> <span class="bs bg"><svg class="ic" width="12" height="11" viewBox="0 0 12 11" style="margin-right:4px;vertical-align:-2px;margin-left:-1px"><path d="M0.2 10.8L1 7.3L8.8 0.2L11.2 2.8L3.4 9.9z" fill="#fff"/><path d="M7.1 1.7L9.5 4.4" stroke="rgba(0,80,0,.35)" stroke-width=".7"/></svg>Edit</span> <span class="bs bd"><svg class="ic" width="11" height="11" viewBox="0 0 11 11" style="vertical-align:-1px;margin-left:-1px;margin-right:1px"><path d="M0.2 1.3h10.6v1.3H0.2z M3.6 0.4h1.3v1H3.6z M6.1 0.4h1.3v1H6.1z" fill="#fff"/><path d="M1.6 2.4v7.8h7.8V2.4" fill="none" stroke="#fff" stroke-width="1.2"/><path d="M3.7 3.4v5.6M5.5 3.4v5.6M7.3 3.4v5.6" stroke="#fff" stroke-width="1"/></svg></span></td></tr>

</table></div>
  <div id="strip"></div>
  <div id="info">Showing 1 to 18 of 18 entries</div>
</div>
<div id="pag"><span style="width:98px;padding-left:31px"><svg width="15" height="7" viewBox="0 0 15 7" style="position:absolute;left:12px;top:11px"><path d="M0.8 3.5H14.5 M3.8 0.7L0.8 3.5L3.8 6.3" stroke="#999" stroke-width="1" fill="none"/></svg>Previous</span><span style="width:32px;background:#f5f5f5;text-align:center">1</span><span style="width:70px;padding-left:12px">Next<svg width="15" height="7" viewBox="0 0 15 7" style="position:absolute;left:44px;top:11px"><path d="M0.5 3.5H14.2 M11.2 0.7L14.2 3.5L11.2 6.3" stroke="#999" stroke-width="1" fill="none"/></svg></span></div>
<div id="fsh"></div>
<div id="ftr"><div id="ftxt">Copyright 2013 TextRep <a>Terms of Service</a> <a>Earnings Disclaimer</a></div></div>
</body></html>
